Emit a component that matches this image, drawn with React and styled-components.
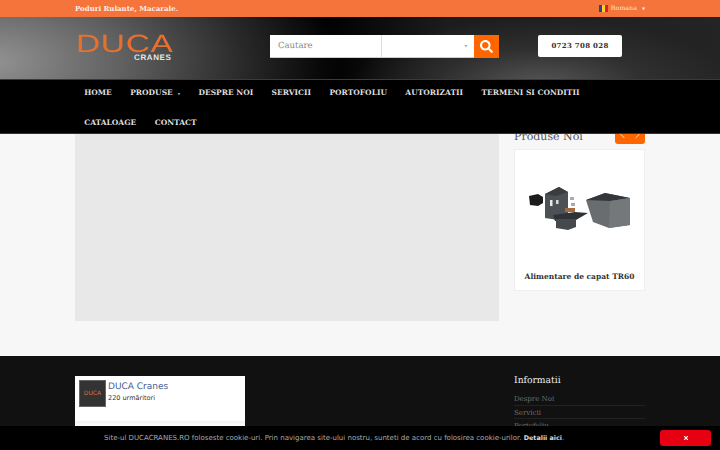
import styled, { createGlobalStyle } from "styled-components";
import { FaSearch, FaTimes } from "react-icons/fa";
import { ChevronLeft, ChevronRight } from "lucide-react";

const Global = createGlobalStyle`
    html, body { margin: 0; padding: 0; height: 450px; overflow: hidden; background: #f7f7f7; }
    body { font-family: "DejaVu Serif", serif; text-rendering: geometricPrecision; }
    * { box-sizing: border-box; }
`

const Page = styled.div`
    position: relative;
    width: 720px;
    height: 450px;
    overflow: hidden;
`

const Container = styled.div`
    width: 570px;
    margin: 0 auto;
`

const TopBar = styled.div`
    height: 17px;
    background: #f5743b;
    color: #fff;
`

const TopInner = styled(Container)`
    display: flex;
    justify-content: space-between;
    align-items: center;
    height: 16px;
`

const Tagline = styled.span`
    font-size: 7px;
    font-weight: bold;
    color: #fdeee6;
`

const Lang = styled.span`
    display: flex;
    align-items: center;
    gap: 3px;
    font-size: 6.3px;
    color: #fde6da;
`

const Caret = styled.span`
    font-size: 4px;
    margin-left: 2px;
`

const Header = styled.header`
    height: 62px;
    background:
        radial-gradient(ellipse 190px 70px at 540px 70px, #585858 0%, rgba(60,60,60,0.55) 55%, rgba(30,30,30,0) 100%),
        radial-gradient(ellipse 350px 170px at -10px 45px, #939393 0%, #606060 38%, #2a2a2a 72%, rgba(0,0,0,0) 100%),
        linear-gradient(90deg, #000 45%, #1c1c1c 62%, #242424 100%);
`

const HeaderInner = styled(Container)`
    display: flex;
    align-items: center;
    height: 100%;
    padding-bottom: 4px;
`

const Logo = styled.div`
    width: 195px;
    padding: 5px 0 0 1px;
    display: flex;
    flex-direction: column;
`

const LogoMark = styled.span`
    font-family: "Liberation Sans", sans-serif;
    font-size: 25px;
    line-height: 19px;
    letter-spacing: 0.5px;
    color: #e8702f;
    transform: scaleX(1.34);
    transform-origin: left center;
`

const LogoSub = styled.span`
    font-family: "Liberation Sans", sans-serif;
    font-size: 8px;
    line-height: 8px;
    font-weight: bold;
    color: #e6e6e6;
    margin: 0 0 0 58px;
    letter-spacing: 0.6px;
`

const Search = styled.div`
    display: flex;
    width: 229px;
    height: 23px;
`

const SearchInput = styled.div`
    width: 112px;
    padding-left: 8px;
    background: #fff;
    border-right: 1px solid #ddd;
    border-bottom: 1px solid #ccc;
    font-size: 8.5px;
    line-height: 23px;
    color: #888;
`

const SearchSelect = styled.div`
    flex: 1;
    background: #fff;
    border-bottom: 1px solid #ccc;
    padding-right: 7px;
    text-align: right;
    font-size: 3px;
    line-height: 22px;
    color: #999;
`

const SearchButton = styled.div`
    width: 25px;
    display: flex;
    align-items: center;
    justify-content: center;
    background: #ff6600;
    color: #fff;
    font-size: 13px;
`

const Phone = styled.div`
    width: 84px;
    height: 22px;
    margin-left: 39px;
    background: #fff;
    border-radius: 2px;
    font-size: 7px;
    font-weight: bold;
    line-height: 22px;
    text-align: center;
    color: #333;
    letter-spacing: 0.3px;
`

const Nav = styled.nav`
    position: relative;
    z-index: 2;
    height: 55px;
    background: #000;
    border-top: 1px solid #3a3a3a;
    border-bottom: 1px solid #333;
`

const NavList = styled(Container)`
    display: flex;
    flex-wrap: wrap;
    margin-top: -1px;
`

const NavItem = styled.a`
    display: block;
    padding: 0 9.2px;
    font-size: 7.5px;
    font-weight: bold;
    line-height: 27.5px;
    color: #dedede;
`

const NavCaret = styled.span`
    margin-left: 5px;
    font-size: 3px;
    color: #aaa;
`

const Main = styled(Container)`
    display: flex;
    justify-content: space-between;
    height: 232px;
    margin-top: -10px;
`

const Slider = styled.div`
    width: 424px;
    height: 197px;
    background: #e8e8e8;
`

const Sidebar = styled.aside`
    width: 131px;
`

const SideHead = styled.div`
    display: flex;
    justify-content: space-between;
    align-items: flex-end;
    height: 20px;
    margin-bottom: 5px;
`

const SideTitle = styled.h3`
    margin: 0 0 -3px;
    font-size: 11px;
    font-weight: normal;
    line-height: 20px;
    color: #555;
`

const Arrows = styled.div`
    display: flex;
    justify-content: space-around;
    align-items: center;
    width: 30px;
    height: 20px;
    border-radius: 3px;
    background: #ff6600;
    color: #fff;
`

const ProductCard = styled.div`
    height: 142px;
    background: #fff;
    border: 1px solid #efefef;
    text-align: center;
`

const ProductImage = styled.svg`
    display: block;
    width: 129px;
    height: 118px;
    filter: blur(0.4px);
`

const ProductName = styled.div`
    font-size: 7.5px;
    font-weight: bold;
    line-height: 12px;
    margin-top: 3px;
    color: #333;
    white-space: nowrap;
`

const Footer = styled.footer`
    height: 94px;
    background: #111;
`

const FooterInner = styled(Container)`
    display: flex;
    justify-content: space-between;
    padding-top: 20px;
`

const FbBox = styled.div`
    width: 170px;
    height: 70px;
    padding: 4px;
    background: linear-gradient(#fff 45px, #f1f1f1 45px, #fff 50px);
    display: flex;
    gap: 2px;
    font-family: "DejaVu Sans", sans-serif;
`

const FbThumb = styled.div`
    width: 27px;
    height: 27px;
    background: #333;
    border: 1px solid #666;
    display: flex;
    align-items: center;
    justify-content: center;
    font-size: 6px;
    color: #d8703a;
`

const FbName = styled.div`
    margin-top: 1px;
    font-size: 9px;
    line-height: 13px;
    color: #4a5f8f;
`

const FbFollowers = styled.div`
    font-size: 6.5px;
    line-height: 9px;
    margin-top: 0;
    color: #333;
`

const InfoColumn = styled.div`
    width: 131px;
`

const InfoTitle = styled.h4`
    margin: 0 0 6px;
    font-size: 9.2px;
    font-weight: normal;
    line-height: 10px;
    color: #eee;
`

const InfoLink = styled.div`
    height: 13.5px;
    font-size: 7px;
    line-height: 14px;
    color: #6e6e6e;
    border-bottom: 1px solid #222;
`

const CookieBar = styled.div`
    position: absolute;
    left: 0;
    right: 0;
    bottom: 0;
    z-index: 3;
    display: flex;
    align-items: center;
    height: 24px;
    padding: 0 9px 0 104px;
    background: #000;
    font-family: "DejaVu Sans", sans-serif;
    font-size: 7px;
    color: #aaa;
`

const CookieText = styled.div`
    flex: 1;
    white-space: nowrap;
    b { color: #ddd; font-weight: bold; font-size: 6.4px; }
`

const CookieClose = styled.div`
    width: 51px;
    height: 16px;
    display: flex;
    align-items: center;
    justify-content: center;
    border-radius: 3px;
    background: #e60012;
    color: #fff;
    font-size: 6px;
`

const navItems = ["DESPRE NOI", "SERVICII", "PORTOFOLIU", "AUTORIZATII", "TERMENI SI CONDITII", "CATALOAGE", "CONTACT"]

function Flag() {
    return <svg width="9" height="7" viewBox="0 0 9 7">
        <rect width="3" height="7" fill="#2b3f9e" />
        <rect x="3" width="3" height="7" fill="#f7d51d" />
        <rect x="6" width="3" height="7" fill="#d5202c" />
    </svg>
}

function ProductDrawing() {
    return <ProductImage viewBox="0 0 129 118">
        <path d="M14 46 l9 -2 l5 3 v6 l-5 3 l-8 -1 z" fill="#1c1c1c" />
        <path d="M30 44 l14 -7 l9 5 v24 l-10 4 l-13 -2 z" fill="#4d5054" />
        <path d="M30 44 l14 -7 l9 5 l-12 4 z" fill="#3a3d40" />
        <rect x="35" y="50" width="2.5" height="6" fill="#e8e8e8" />
        <rect x="41" y="50" width="2.5" height="4" fill="#d8d8d8" />
        <path d="M38 65 l22 -3 l13 1 l-12 7 l-21 1 z" fill="#303336" />
        <path d="M41 69 h20 v8 l-8 3 l-12 -2 z" fill="#45484c" />
        <path d="M55 47 h4 v3 h-4 z M56 53 h4 v3 h-4 z" fill="#aaa" />
        <path d="M50 58 h10 v4 h-10 z" fill="#a8683f" />
        <path d="M71 50 l19 -7 l25 5 v27 l-21 3 l-16 -6 z" fill="#6a6d70" />
        <path d="M71 50 l19 -7 l25 5 l-20 3 z" fill="#33363a" />
        <path d="M95 51 l20 -3 v27 l-21 3 z" fill="#75787b" />
    </ProductImage>
}

export default function App() {
    return <Page>
        <Global />
        <TopBar>
            <TopInner>
                <Tagline>Poduri Rulante, Macarale.</Tagline>
                <Lang><Flag /> Romana <Caret>▼</Caret></Lang>
            </TopInner>
        </TopBar>
        <Header>
            <HeaderInner>
                <Logo>
                    <LogoMark>DUCA</LogoMark>
                    <LogoSub>CRANES</LogoSub>
                </Logo>
                <Search>
                    <SearchInput>Cautare</SearchInput>
                    <SearchSelect>▼</SearchSelect>
                    <SearchButton><FaSearch /></SearchButton>
                </Search>
                <Phone>0723 708 028</Phone>
            </HeaderInner>
        </Header>
        <Nav>
            <NavList>
                <NavItem>HOME</NavItem>
                <NavItem>PRODUSE<NavCaret>▼</NavCaret></NavItem>
                {navItems.map(item => <NavItem key={item}>{item}</NavItem>)}
            </NavList>
        </Nav>
        <Main>
            <Slider />
            <Sidebar>
                <SideHead>
                    <SideTitle>Produse Noi</SideTitle>
                    <Arrows><ChevronLeft size={13} strokeWidth={1.5} /><ChevronRight size={13} strokeWidth={1.5} /></Arrows>
                </SideHead>
                <ProductCard>
                    <ProductDrawing />
                    <ProductName>Alimentare de capat TR60</ProductName>
                </ProductCard>
            </Sidebar>
        </Main>
        <Footer>
            <FooterInner>
                <FbBox>
                    <FbThumb>DUCA</FbThumb>
                    <div>
                        <FbName>DUCA Cranes</FbName>
                        <FbFollowers>220 urmăritori</FbFollowers>
                    </div>
                </FbBox>
                <InfoColumn>
                    <InfoTitle>Informatii</InfoTitle>
                    <InfoLink>Despre Noi</InfoLink>
                    <InfoLink>Servicii</InfoLink>
                    <InfoLink>Portofoliu</InfoLink>
                </InfoColumn>
            </FooterInner>
        </Footer>
        <CookieBar>
            <CookieText>Site-ul DUCACRANES.RO foloseste cookie-uri. Prin navigarea site-ului nostru, sunteti de acord cu folosirea cookie-urilor. <b>Detalii aici</b>.</CookieText>
            <CookieClose><FaTimes /></CookieClose>
        </CookieBar>
    </Page>
}
